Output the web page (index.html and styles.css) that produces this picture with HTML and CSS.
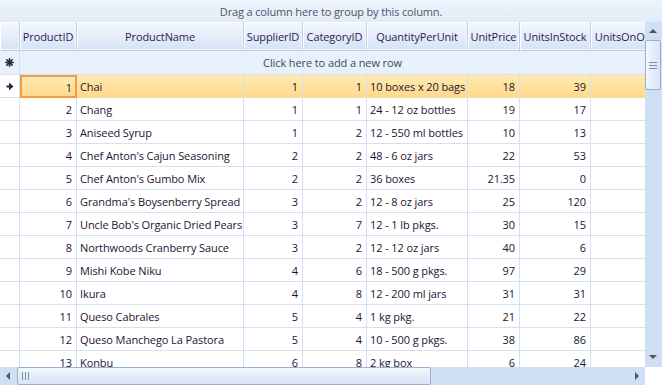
FILE: index.html
```html
<!DOCTYPE html>
<html lang="en">
<head>
    <meta charset="UTF-8">
    <meta name="viewport" content="width=device-width, initial-scale=1.0">
    <title>Products Grid</title>
    <link rel="stylesheet" href="styles.css">
</head>
<body>
    <div class="grid">
        <div class="group-panel">Drag a column here to group by this column.</div>
        <div class="grid-body">
            <div class="viewport">
                <div class="row header">
                    <div class="cell"></div>
                    <div class="cell">ProductID</div>
                    <div class="cell">ProductName</div>
                    <div class="cell">SupplierID</div>
                    <div class="cell">CategoryID</div>
                    <div class="cell">QuantityPerUnit</div>
                    <div class="cell">UnitPrice</div>
                    <div class="cell">UnitsInStock</div>
                    <div class="cell">UnitsOnOrder</div>
                </div>
                <div class="new-row">
                    <div class="indicator">
                        <svg width="9" height="9" viewBox="0 0 9 9"><g stroke="#1b2a4a" stroke-width="1.6" stroke-linecap="round"><line x1="4.5" y1="0.8" x2="4.5" y2="8.2"/><line x1="0.8" y1="4.5" x2="8.2" y2="4.5"/><line x1="1.9" y1="1.9" x2="7.1" y2="7.1"/><line x1="7.1" y1="1.9" x2="1.9" y2="7.1"/></g></svg>
                    </div>
                    <div class="new-row-text">Click here to add a new row</div>
                </div>
                <div id="rows"></div>
            </div>
            <div class="vscroll">
                <div class="arrow up"></div>
                <div class="vthumb"><span></span><span></span><span></span></div>
                <div class="vtrack"></div>
                <div class="arrow down"></div>
            </div>
            <div class="hscroll">
                <div class="arrow left"></div>
                <div class="hthumb"><span></span><span></span><span></span></div>
                <div class="htrack"></div>
                <div class="arrow right"></div>
            </div>
            <div class="corner"></div>
        </div>
    </div>

    <script>
        const products = [
            [1, "Chai", 1, 1, "10 boxes x 20 bags", 18, 39],
            [2, "Chang", 1, 1, "24 - 12 oz bottles", 19, 17],
            [3, "Aniseed Syrup", 1, 2, "12 - 550 ml bottles", 10, 13],
            [4, "Chef Anton's Cajun Seasoning", 2, 2, "48 - 6 oz jars", 22, 53],
            [5, "Chef Anton's Gumbo Mix", 2, 2, "36 boxes", 21.35, 0],
            [6, "Grandma's Boysenberry Spread", 3, 2, "12 - 8 oz jars", 25, 120],
            [7, "Uncle Bob's Organic Dried Pears", 3, 7, "12 - 1 lb pkgs.", 30, 15],
            [8, "Northwoods Cranberry Sauce", 3, 2, "12 - 12 oz jars", 40, 6],
            [9, "Mishi Kobe Niku", 4, 6, "18 - 500 g pkgs.", 97, 29],
            [10, "Ikura", 4, 8, "12 - 200 ml jars", 31, 31],
            [11, "Queso Cabrales", 5, 4, "1 kg pkg.", 21, 22],
            [12, "Queso Manchego La Pastora", 5, 4, "10 - 500 g pkgs.", 38, 86],
            [13, "Konbu", 6, 8, "2 kg box", 6, 24]
        ];

        const arrow = '<svg width="8" height="9" viewBox="0 0 8 9"><path d="M3 0.5 L7.5 4.5 L3 8.5 Z" fill="#1b2a4a"/><rect x="0.5" y="3.5" width="3" height="2" fill="#1b2a4a"/></svg>';
        const rows = document.getElementById('rows');

        products.forEach(function(p, i) {
            const row = document.createElement('div');
            row.className = i === 0 ? 'row data selected' : 'row data';
            row.innerHTML =
                '<div class="cell indicator">' + (i === 0 ? arrow : '') + '</div>' +
                '<div class="cell num' + (i === 0 ? ' current' : '') + '">' + p[0] + '</div>' +
                '<div class="cell">' + p[1] + '</div>' +
                '<div class="cell num">' + p[2] + '</div>' +
                '<div class="cell num">' + p[3] + '</div>' +
                '<div class="cell">' + p[4] + '</div>' +
                '<div class="cell num">' + p[5] + '</div>' +
                '<div class="cell num">' + p[6] + '</div>' +
                '<div class="cell"></div>';
            rows.appendChild(row);
        });
    </script>
</body>
</html>
```

FILE: styles.css
```css
body {
    margin: 0;
    font-family: "Open Sans", "Noto Sans", sans-serif;
    font-size: 11px;
    letter-spacing: -0.1px;
    color: #1c1433;
    background-color: #ffffff;
}
.grid {
    width: 662px;
    height: 385px;
    display: flex;
    flex-direction: column;
    overflow: hidden;
}
.group-panel {
    height: 22px;
    flex: none;
    display: flex;
    align-items: center;
    justify-content: center;
    padding-top: 1px;
    box-sizing: border-box;
    background: linear-gradient(#eef3fb, #e2ebf8);
    color: #4b5669;
    font-size: 11px;
    letter-spacing: -0.15px;
}
.grid-body {
    flex: 1;
    display: grid;
    grid-template-columns: 645px 17px;
    grid-template-rows: 345px 18px;
    min-height: 0;
}
.viewport {
    overflow: hidden;
    background-color: #ffffff;
}
.row {
    display: grid;
    grid-template-columns: 20px 57px 167px 59px 64px 101px 52px 71px 80px;
}
.cell {
    box-sizing: border-box;
    border-right: 1px solid #d3e1f4;
    border-bottom: 1px solid #d3e1f4;
    padding: 1px 3px 0;
    white-space: nowrap;
    overflow: hidden;
    display: flex;
    align-items: center;
}
.header {
    height: 29px;
}
.header .cell {
    justify-content: center;
    padding: 1px 1px 0;
    background: linear-gradient(#f3f7fd, #e3ecf9 55%, #d5e3f6);
    border-right: 1px solid #bccfe9;
    border-bottom: 1px solid #bccfe9;
    box-shadow: inset 1px 1px 0 #ffffff, inset -1px -1px 0 #eef4fc;
    color: #2e1c4d;
    font-size: 11px;
}
.new-row {
    height: 24px;
    display: flex;
    background-color: #e8f0fb;
    border-bottom: 1px solid #d3e1f4;
    box-sizing: border-box;
}
.new-row .indicator {
    width: 20px;
    box-sizing: border-box;
    border-right: 1px solid #d3e1f4;
    display: flex;
    align-items: center;
    justify-content: center;
}
.new-row-text {
    width: 625px;
    display: flex;
    align-items: center;
    justify-content: center;
    color: #3f4a5e;
}
.data {
    height: 23px;
}
.data .cell.num {
    justify-content: flex-end;
    padding-right: 4px;
}
.data .cell.indicator {
    justify-content: center;
    padding: 0;
    background-color: #ffffff;
}
.selected .cell {
    background: linear-gradient(#ffeab2, #ffd98c);
    border-bottom-color: #f4d9a6;
}
.selected .cell.indicator {
    background: #ffffff;
    border-bottom-color: #d3e1f4;
}
.selected .cell.current {
    border: 2px solid #f39a45;
    padding-right: 3px;
}
.vscroll {
    display: flex;
    flex-direction: column;
    background-color: #cfdff4;
}
.hscroll {
    display: flex;
    background-color: #cfdff4;
}
.corner {
    background-color: #ffffff;
}
.vtrack,
.htrack {
    flex: 1;
}
.arrow {
    flex: none;
    width: 17px;
    height: 18px;
    position: relative;
}
.arrow::after {
    content: "";
    position: absolute;
    border: 4px solid transparent;
}
.arrow.up::after {
    left: 4px;
    top: 3px;
    border-bottom: 4px solid #4a5666;
}
.arrow.down::after {
    left: 4px;
    top: 6px;
    border-top: 4px solid #4a5666;
}
.arrow.left::after {
    left: 2px;
    top: 5px;
    border-right: 4px solid #4a5666;
}
.arrow.right::after {
    left: 7px;
    top: 5px;
    border-left: 4px solid #4a5666;
}
.vthumb {
    flex: none;
    height: 50px;
    margin: 0 1px 0 0;
    box-sizing: border-box;
    border: 1px solid #98b0cf;
    border-radius: 2px;
    background: linear-gradient(90deg, #f4f8fd, #e4edf9 45%, #d9e5f5);
    display: flex;
    flex-direction: column;
    align-items: center;
    justify-content: center;
    gap: 2px;
}
.vthumb span {
    width: 8px;
    height: 1px;
    background-color: #7c8fa8;
}
.hthumb {
    flex: none;
    width: 414px;
    box-sizing: border-box;
    border: 1px solid #98b0cf;
    border-radius: 2px;
    background: linear-gradient(#f4f8fd, #e4edf9 45%, #d9e5f5);
    display: flex;
    align-items: center;
    gap: 2px;
    padding-left: 4px;
}
.hthumb span {
    width: 1px;
    height: 8px;
    background-color: #7c8fa8;
}
```
